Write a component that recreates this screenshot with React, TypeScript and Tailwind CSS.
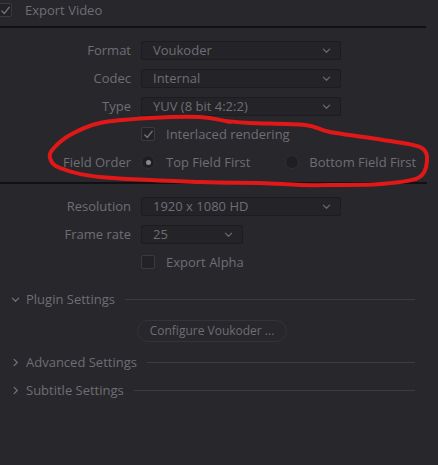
import React from 'react';

// dim grey used for all (disabled) labels in this panel
const TEXT = 'text-[#6f6e74]';

const Chevron = ({ dir = 'down', className = '' }: { dir?: 'down' | 'right'; className?: string }) => (
  <svg width="9" height="9" viewBox="0 0 10 10" className={className} fill="none">
    {dir === 'down' ? (
      <path d="M1.5 3.5 L5 7 L8.5 3.5" stroke="currentColor" strokeWidth="1.4" strokeLinecap="round" strokeLinejoin="round" />
    ) : (
      <path d="M3.5 1.5 L7 5 L3.5 8.5" stroke="currentColor" strokeWidth="1.4" strokeLinecap="round" strokeLinejoin="round" />
    )}
  </svg>
);

const Check = ({ checked }: { checked: boolean }) => (
  <div className="w-[14px] h-[14px] rounded-[2px] border border-[#3a393f] bg-[#232227] flex items-center justify-center shrink-0">
    {checked && (
      <svg width="11" height="11" viewBox="0 0 12 12" fill="none">
        <path d="M2 6.5 L4.8 9.2 L10 2.5" stroke="#727176" strokeWidth="1.5" strokeLinecap="round" strokeLinejoin="round" />
      </svg>
    )}
  </div>
);

const Radio = ({ on }: { on: boolean }) => (
  <div className="w-[14px] h-[14px] rounded-full border border-[#302f34] bg-[#1f1e23] flex items-center justify-center shrink-0">
    {on && <div className="w-[5px] h-[5px] rounded-full bg-[#8a898e]" />}
  </div>
);

const Select = ({ value, width }: { value: string; width: string }) => (
  <div className={`${width} h-[19px] rounded-[2px] border border-[#1d1c21] bg-[#242328] flex items-center justify-between pl-[11px] pr-[9px]`}>
    <span className={TEXT}>{value}</span>
    <Chevron className="text-[#68676c]" />
  </div>
);

const Row = ({ label, children }: { label?: string; children: React.ReactNode }) => (
  <div className="h-[28px] flex items-center">
    <div className={`w-[131px] text-right ${TEXT}`}>{label}</div>
    <div className="ml-[10px] flex items-center">{children}</div>
  </div>
);

const Section = ({ title, open }: { title: string; open: boolean }) => (
  <div className="h-[28px] flex items-center pl-[11px] pr-[23px]">
    <Chevron dir={open ? 'down' : 'right'} className="text-[#727176] w-[9px]" />
    <span className={`ml-[6px] ${TEXT}`}>{title}</span>
    <div className="flex-1 ml-[10px] h-px bg-[#3c3b40]" />
  </div>
);

// freehand red annotation, smoothed through the traced points
const PTS: [number, number][] = [
  [230, 122], [200, 117], [150, 118], [100, 123], [70, 135], [53, 149], [50, 158], [60, 168],
  [100, 177], [200, 182], [260, 183], [300, 185], [335, 185], [380, 184], [418, 178], [427, 161],
  [420, 147], [383, 140], [330, 132], [305, 125], [250, 123], [226, 121],
];

function smooth(p: [number, number][]) {
  let d = `M${p[0][0]} ${p[0][1]}`;
  for (let i = 0; i < p.length - 1; i++) {
    const p0 = p[Math.max(0, i - 1)], p1 = p[i], p2 = p[i + 1], p3 = p[Math.min(p.length - 1, i + 2)];
    const c1 = [p1[0] + (p2[0] - p0[0]) / 6, p1[1] + (p2[1] - p0[1]) / 6];
    const c2 = [p2[0] - (p3[0] - p1[0]) / 6, p2[1] - (p3[1] - p1[1]) / 6];
    d += ` C${c1[0]} ${c1[1]} ${c2[0]} ${c2[1]} ${p2[0]} ${p2[1]}`;
  }
  return d;
}

export default function App() {
  return (
    <div
      className="relative w-[438px] h-[465px] overflow-hidden bg-[#28272c] text-[13px] leading-none"
      style={{ fontFamily: '"Open Sans", "Noto Sans", sans-serif' }}
    >
      {/* Export Video header */}
      <div className="h-[20px] mb-[6px] flex items-center -ml-[2px]">
        <Check checked />
        <span className={`ml-[13px] ${TEXT}`}>Export Video</span>
      </div>
      <div className="w-[426px] h-[2px] bg-[#111013]" />

      <div className="pt-[8px] pb-[6px]">
        <Row label="Format"><Select value="Voukoder" width="w-[200px]" /></Row>
        <Row label="Codec"><Select value="Internal" width="w-[200px]" /></Row>
        <Row label="Type"><Select value="YUV (8 bit 4:2:2)" width="w-[200px]" /></Row>
        <Row>
          <Check checked />
          <span className={`ml-[11px] ${TEXT}`}>Interlaced rendering</span>
        </Row>
        <Row label="Field Order">
          <Radio on />
          <span className={`ml-[11px] ${TEXT}`}>Top Field First</span>
          <div className="ml-[35px]"><Radio on={false} /></div>
          <span className={`ml-[10px] ${TEXT}`}>Bottom Field First</span>
        </Row>
      </div>
      <div className="w-[427px] h-[2px] bg-[#111013]" />

      <div className="pt-[8px]">
        <Row label="Resolution"><Select value="1920 x 1080 HD" width="w-[200px]" /></Row>
        <Row label="Frame rate"><Select value="25" width="w-[102px]" /></Row>
        <Row>
          <Check checked={false} />
          <span className={`ml-[11px] ${TEXT}`}>Export Alpha</span>
        </Row>
      </div>

      <div className="mt-[9px]">
        <Section title="Plugin Settings" open />
        <div className="h-[35px] flex items-center pl-[137px]">
          <div className={`w-[150px] h-[22px] rounded-full border border-[#343338] flex items-center justify-center text-[12px] ${TEXT}`}>
            Configure Voukoder ...
          </div>
        </div>
        <Section title="Advanced Settings" open={false} />
        <Section title="Subtitle Settings" open={false} />
      </div>

      <svg className="absolute inset-0 pointer-events-none" width="438" height="465">
        <path d={smooth(PTS)} fill="none" stroke="#e01818" strokeWidth="4" strokeLinecap="round" strokeLinejoin="round" />
      </svg>
    </div>
  );
}
